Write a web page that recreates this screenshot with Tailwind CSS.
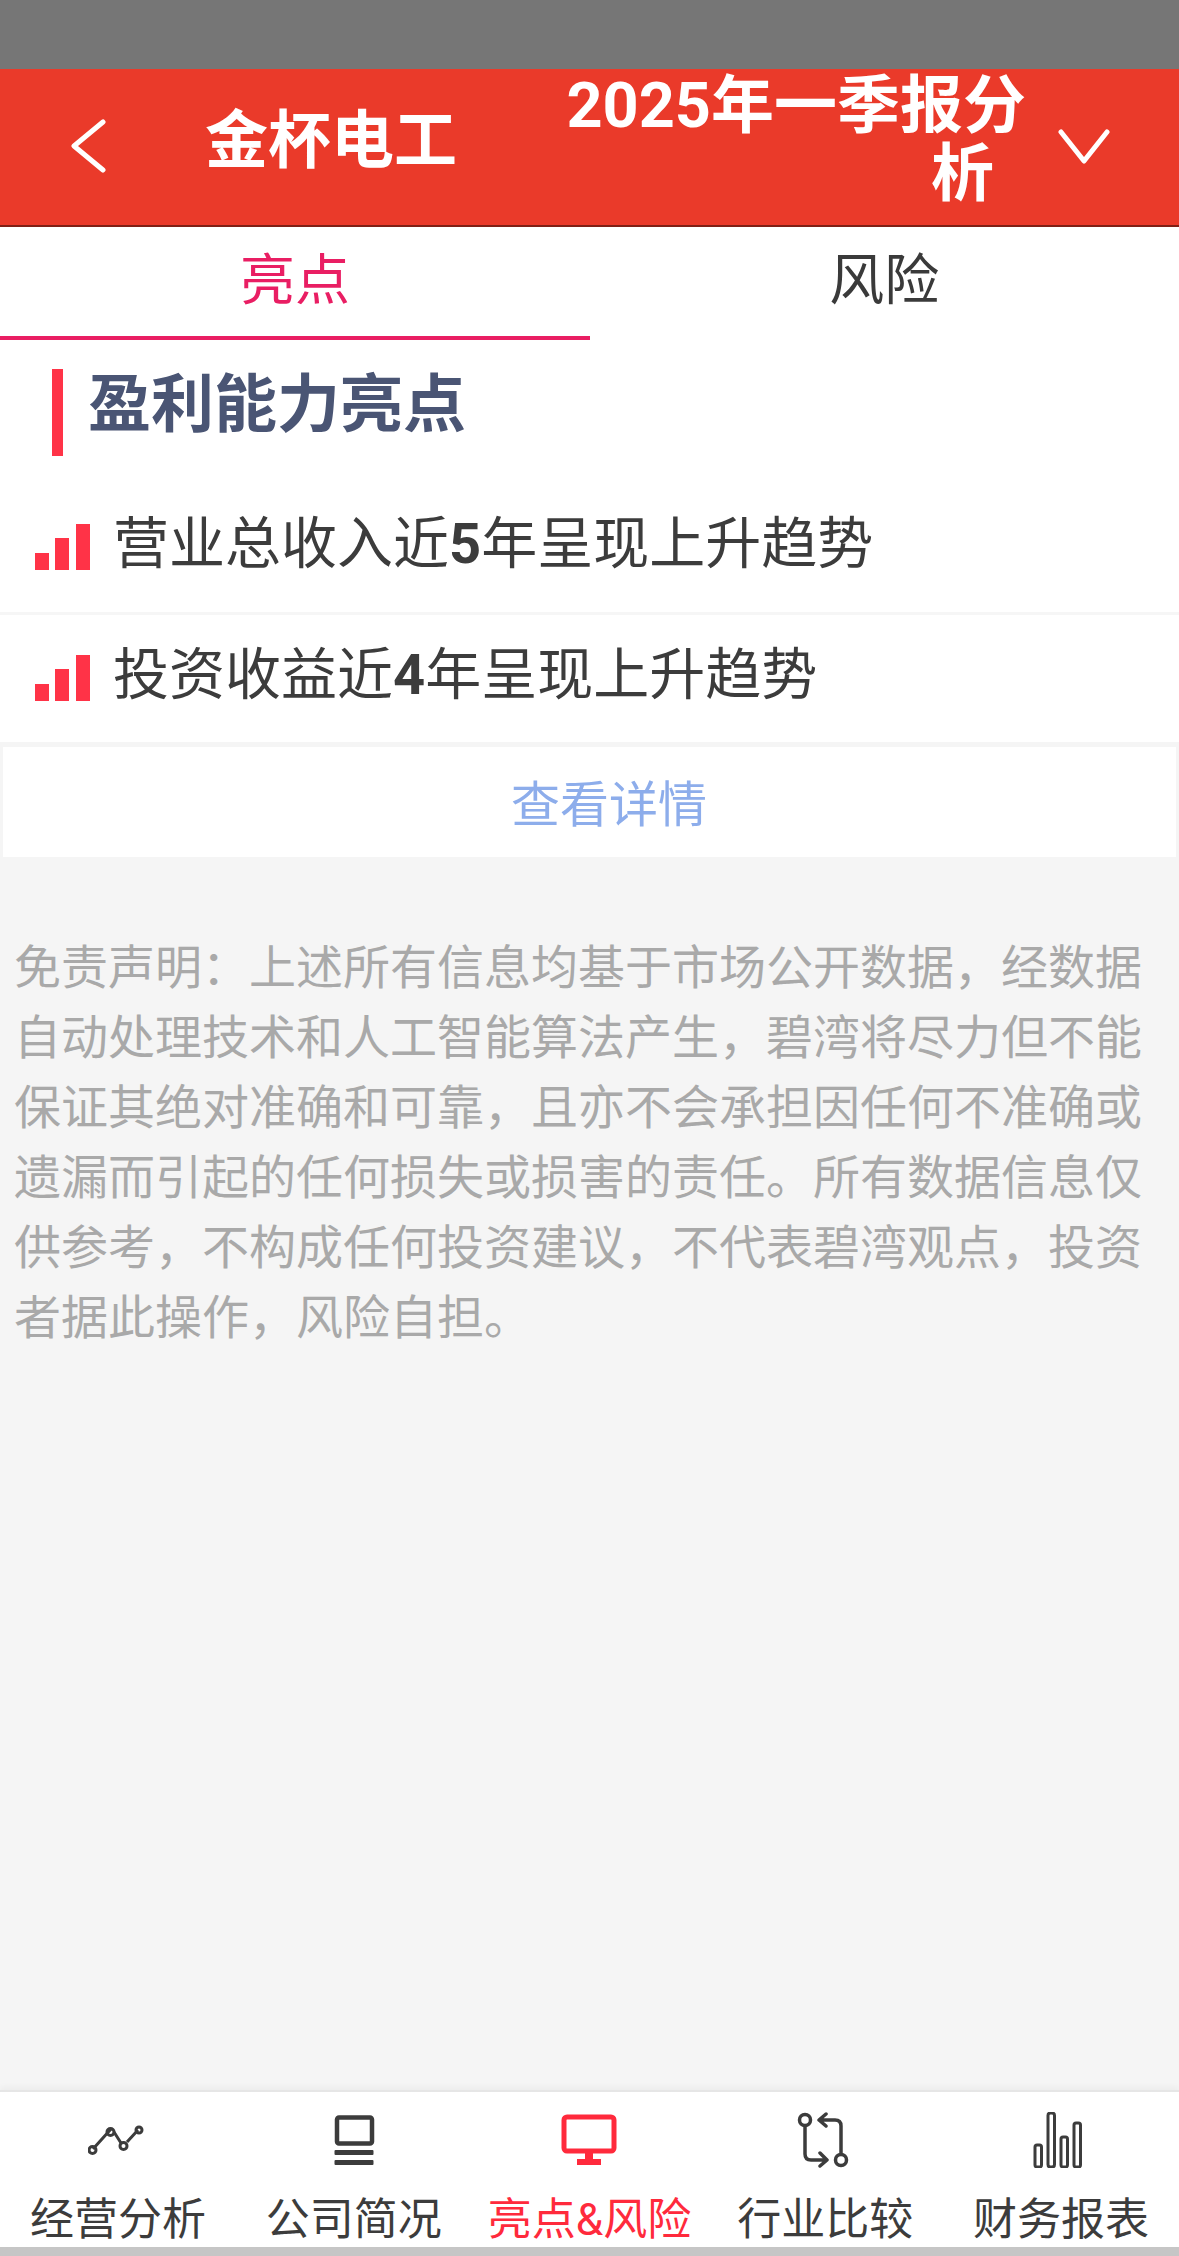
<!DOCTYPE html>
<html lang="zh-CN">
<head>
    <meta charset="UTF-8">
    <meta name="viewport" content="width=device-width, initial-scale=1.0">
    <title>金杯电工</title>
    <script src="https://cdn.jsdelivr.net/npm/@tailwindcss/browser@4"></script>
</head>
<body class="bg-[#f5f5f5] font-['Roboto','Noto_Sans_CJK_SC',sans-serif]">
<div class="w-[1179px] h-[2256px] flex flex-col overflow-hidden">
    <!-- status bar -->
    <div class="h-[69px] shrink-0 bg-[#767676]"></div>

    <!-- header -->
    <header class="h-[158px] shrink-0 bg-[#ea3a2a] border-b-2 border-[#7f2016] flex items-center text-white font-bold">
        <svg class="ml-[70px] w-[37px] h-[54px] shrink-0 -mt-[2px]" viewBox="0 0 37 54" fill="none" stroke="#fff" stroke-width="5" stroke-linecap="round" stroke-linejoin="round"><path d="M33 3 L4 27 L33 51" /></svg>
        <div class="ml-[98px] w-[363px] shrink-0 text-[63px] leading-[70px] -mt-[12px]">金杯电工</div>
        <div class="w-[458px] shrink-0 flex flex-col items-end text-[63px] leading-[68px] -mt-[14px]">
            <span class="whitespace-nowrap">2025年一季报分</span>
            <span class="pr-[32px]">析</span>
        </div>
        <svg class="ml-[32px] w-[52px] h-[36px] shrink-0" viewBox="0 0 52 36" fill="none" stroke="#fff" stroke-width="5" stroke-linecap="round" stroke-linejoin="round"><path d="M3 3 L26 32 L49 3" /></svg>
    </header>

    <!-- tabs -->
    <div class="h-[115px] shrink-0 bg-white grid grid-cols-2 text-[55px] leading-[64px] text-center">
        <div class="w-[590px] h-[113px] pt-[21px] text-[#e91e63] border-b-4 border-[#e91e63]">亮点</div>
        <div class="pt-[21px] text-[#3a3a3a]">风险</div>
    </div>

    <!-- highlights -->
    <section class="shrink-0 bg-white">
        <div class="h-[130px] pl-[52px] pt-[27px]">
            <div class="flex items-start">
                <div class="w-[11px] h-[87px] bg-[#ff3347]"></div>
                <h2 class="ml-[25px] text-[63px] leading-[72px] font-bold text-[#4a5574]">盈利能力亮点</h2>
            </div>
        </div>
        <div class="h-[143px] pl-[35px] pt-[37px] flex items-start border-b-[3px] border-[#f6f6f6] text-[56px] leading-[70px] text-[#3c3c3c]">
            <svg class="w-[55px] h-[46px] shrink-0 mt-[15px]" viewBox="0 0 55 46" fill="#ff3347"><rect x="0" y="29" width="14" height="17" /><rect x="20" y="14" width="14" height="32" /><rect x="41" y="0" width="14" height="46" /></svg>
            <span class="ml-[23px]">营业总收入近<b class="font-bold">5</b>年呈现上升趋势</span>
        </div>
        <div class="h-[127px] pl-[35px] pt-[25px] flex items-start text-[56px] leading-[70px] text-[#3c3c3c]">
            <svg class="w-[55px] h-[46px] shrink-0 mt-[15px]" viewBox="0 0 55 46" fill="#ff3347"><rect x="0" y="29" width="14" height="17" /><rect x="20" y="14" width="14" height="32" /><rect x="41" y="0" width="14" height="46" /></svg>
            <span class="ml-[23px]">投资收益近<b class="font-bold">4</b>年呈现上升趋势</span>
        </div>
    </section>

    <!-- details link -->
    <div class="mt-[5px] mx-[3px] h-[110px] shrink-0 bg-white flex items-center justify-center pl-[39px] pt-[8px] text-[49px] text-[#8dadeb]">查看详情</div>

    <!-- disclaimer -->
    <p class="flex-1 mt-[76px] px-[14px] text-[47px] leading-[70px] text-[#a9a9a9]">免责声明：上述所有信息均基于市场公开数据，经数据自动处理技术和人工智能算法产生，碧湾将尽力但不能保证其绝对准确和可靠，且亦不会承担因任何不准确或遗漏而引起的任何损失或损害的责任。所有数据信息仅供参考，不构成任何投资建议，不代表碧湾观点，投资者据此操作，风险自担。</p>

    <!-- bottom nav -->
    <nav class="h-[157px] shrink-0 bg-white border-t-2 border-[#e6e6e6] grid grid-cols-5 text-[44px] leading-[52px] text-[#3c3c3c] text-center shadow-[0_-3px_6px_rgba(0,0,0,0.04)]">
        <div class="flex flex-col items-center">
            <svg class="w-[56px] h-[56px] mt-[20px] -ml-[4px]" viewBox="0 0 56 56" fill="none" stroke="#3c3c3c" stroke-width="3"><path d="M5 37 L23 17 M26 20 L33 31 M39 30 L50 18" /><circle cx="4.500" cy="38" r="3.500" /><circle cx="22.500" cy="20" r="3.500" /><circle cx="35.500" cy="34" r="3.500" /><circle cx="51" cy="18" r="3" /></svg>
            <span class="mt-[26px] whitespace-nowrap">经营分析</span>
        </div>
        <div class="flex flex-col items-center">
            <svg class="w-[56px] h-[56px] mt-[20px]" viewBox="0 0 56 56" fill="none"><rect x="11" y="5.500" width="35" height="26" rx="2" stroke="#3c3c3c" stroke-width="4.500" /><rect x="8.500" y="38" width="39" height="5" rx="1" fill="#3c3c3c" /><rect x="8.500" y="48" width="39" height="5" rx="1" fill="#3c3c3c" /></svg>
            <span class="mt-[26px] whitespace-nowrap">公司简况</span>
        </div>
        <div class="flex flex-col items-center text-[#ff2a3c]">
            <svg class="w-[56px] h-[56px] mt-[20px]" viewBox="0 0 56 56" fill="none"><rect x="3" y="5" width="50" height="34" rx="3" stroke="#ff2a3c" stroke-width="5" /><rect x="24" y="40" width="8" height="8" fill="#ff2a3c" /><rect x="16" y="47" width="24" height="6" fill="#ff2a3c" /></svg>
            <span class="mt-[26px] whitespace-nowrap">亮点&amp;风险</span>
        </div>
        <div class="flex flex-col items-center">
            <svg class="w-[56px] h-[56px] mt-[20px] -ml-[6px]" viewBox="0 0 56 56" fill="none" stroke="#3c3c3c" stroke-width="3.500" stroke-linecap="round" stroke-linejoin="round"><circle cx="11" cy="8" r="5.500" /><circle cx="47" cy="48" r="5.500" /><path d="M11 14 V42 Q11 48 17 48 H32 M26 41 L33 48 L26 54" /><path d="M47 42 V14 Q47 8 41 8 H26 M32 2 L25 8 L32 14" /></svg>
            <span class="mt-[26px] whitespace-nowrap">行业比较</span>
        </div>
        <div class="flex flex-col items-center">
            <svg class="w-[56px] h-[56px] mt-[20px] -ml-[6px]" viewBox="0 0 56 56" fill="none" stroke="#3c3c3c" stroke-width="3"><rect x="5" y="33" width="6.500" height="22" rx="2" /><rect x="18" y="1" width="6.500" height="54" rx="2.500" /><rect x="31" y="25" width="6.500" height="30" rx="2" /><rect x="44" y="11" width="6.500" height="44" rx="2" /></svg>
            <span class="mt-[26px] whitespace-nowrap">财务报表</span>
        </div>
    </nav>

    <!-- bottom edge -->
    <div class="h-[9px] shrink-0 bg-[#c6c6c6]"></div>
</div>
</body>
</html>
